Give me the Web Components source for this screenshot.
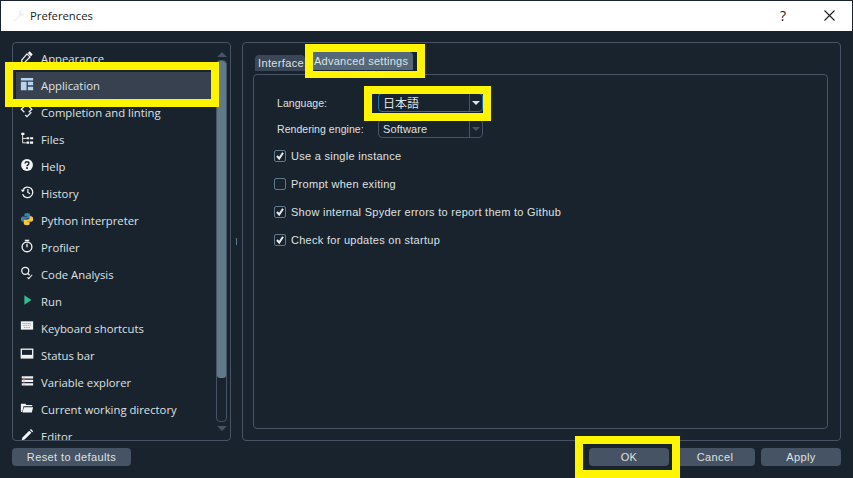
<!DOCTYPE html>
<html>
<head>
<meta charset="utf-8">
<title>Preferences</title>
<style>
  html, body { margin: 0; height: 100%; background: #19232D; }
  body { overflow: hidden; }
</style>
</head>
<body>
<ventana-preferencias></ventana-preferencias>
<script>
const ICONES = {
  appearance: '<path d="M11 1.500l3.500 3.500-2 2-3.500-3.500z" fill="#fff"/><path d="M8 4.500l3.500 3.500-6.500 6.500H2v-3z" fill="none" stroke="#e8eaec" stroke-width="1.400"/><path d="M1.500 15l1-2 1 1z" fill="#fff"/>',
  application: '<path d="M0 0h14v3H0zM0 4.500h6.500V14H0zM8 4.500h6V8.500H8zM8 10h6v4H8z" transform="translate(1 1)" fill="#b7d4ee"/>',
  completion: '<path d="M5 2.500L1.500 6 5 9.500M10 2.500L13.500 6 10 9.500" fill="none" stroke="#e8eaec" stroke-width="1.500"/><path d="M6 12.500l2 2 5-5" fill="none" stroke="#e8eaec" stroke-width="1.500"/>',
  files: '<path d="M1.500 2h3.500v2.500H1.500zM7.500 7h3v2.500h-3zM11.500 7h3.500v2.500h-3.500zM7.500 12h3v2.500h-3zM11.500 12h3.500v2.500h-3.500z" fill="#fff"/><path d="M3 4v9.500h4.500M3 8.500h4.500" fill="none" stroke="#fff"/>',
  help: '<circle cx="8" cy="8" r="6.800" fill="#f2f4f5"/><path d="M5.800 6.200C5.900 4.800 6.800 4.200 8 4.200c1.300 0 2.200.8 2.200 1.900 0 1.800-2.200 1.700-2.200 3.400" fill="none" stroke="#19232D" stroke-width="1.600"/><rect x="7" y="10.500" width="2" height="2" fill="#19232D"/>',
  history: '<path d="M3.500 5.200A6 6 0 1 1 3 10.500" fill="none" stroke="#f0f2f3" stroke-width="1.500"/><path d="M.8 5.500h4.800L3.200 8.300z" fill="#f0f2f3"/><path d="M9 4.500V8.500l2.500 1.500" fill="none" stroke="#f0f2f3" stroke-width="1.400"/>',
  python: '<path d="M7.900 1C5.700 1 5 2 5 3v1.500h3.200V5H3.200C2 5 1 6 1 8s1 3.200 2.200 3.200H5V9.500c0-1.200 1-2 2.200-2h2.800c1 0 1.700-.8 1.700-1.700V3c0-1-1.300-2-3.800-2z" fill="#3d7eb5"/><path d="M8.100 15c2.200 0 2.900-1 2.900-2v-1.500H7.800V11h5c1.200 0 2.200-1 2.200-3s-1-3.200-2.200-3.200H11v1.700c0 1.200-1 2-2.200 2H6c-1 0-1.700.8-1.700 1.700V13c0 1 1.300 2 3.800 2z" fill="#f5c93e"/>',
  profiler: '<rect x="5.500" y=".8" width="5" height="1.500" fill="#f0f2f3"/><circle cx="8" cy="9" r="5.600" fill="none" stroke="#f0f2f3" stroke-width="1.500"/><path d="M8 5.500V9.500" stroke="#f0f2f3" stroke-width="1.500"/>',
  analysis: '<circle cx="6" cy="5.500" r="4" fill="none" stroke="#f0f2f3" stroke-width="1.500"/><path d="M9 8.500l2 2" stroke="#f0f2f3" stroke-width="1.500"/><path d="M8.500 13l1.500 1.500 4-4.500" fill="none" stroke="#f0f2f3" stroke-width="1.200"/>',
  run: '<path d="M5 2.500L13 8l-8 5.500z" fill="#2fc08d"/>',
  keyboard: '<rect x="1" y="1.500" width="14" height="9.500" fill="#f0f2f3"/><path d="M3 4h10M3 6h10M4.500 8.500h7" stroke="#8a959f" stroke-width="1" stroke-dasharray="1.200 .8"/>',
  status: '<rect x="1.500" y="2.500" width="13" height="10" fill="none" stroke="#f0f2f3" stroke-width="1.500"/><rect x="1.500" y="9" width="13" height="3.500" fill="#f0f2f3"/>',
  variable: '<path d="M2 2.500h13v2.500H2zM2 6.500h13v2.500H2zM2 10.500h13v2.500H2z" fill="#f0f2f3"/><path d="M4.500 2.500v10.500" stroke="#e0a080"/>',
  folder: '<path d="M1 3h5l1.500 1.500H14V6H4L2.500 12.500H1z" fill="#f0f2f3"/><path d="M4.500 7H15l-1.500 6H2.800z" fill="#f0f2f3"/>',
  editor: '<path d="M2 14l.8-3.200L10.500 3l2.500 2.500-7.700 7.700z" fill="#f5f6f7"/><path d="M11.300 2.200l1.200-1 2.500 2.500-1 1.200z" fill="#f5f6f7"/>'
};

const ITENS = [
  ['appearance', 'Appearance'], ['application', 'Application'], ['completion', 'Completion and linting'],
  ['files', 'Files'], ['help', 'Help'], ['history', 'History'], ['python', 'Python interpreter'],
  ['profiler', 'Profiler'], ['analysis', 'Code Analysis'], ['run', 'Run'], ['keyboard', 'Keyboard shortcuts'],
  ['status', 'Status bar'], ['variable', 'Variable explorer'], ['folder', 'Current working directory'], ['editor', 'Editor']
];

const FONTE_UI = '"Liberation Sans", "Noto Sans CJK JP", sans-serif';

class BotaoDialogo extends HTMLElement {
  constructor() {
    super();
    this.attachShadow({ mode: "open" }).innerHTML = `
      <style>
        :host {
          display: flex;
          align-items: center;
          justify-content: center;
          box-sizing: border-box;
          height: 18px;
          width: var(--largura, 80px);
          background: #455364;
          border-radius: 4px;
          color: #DFE1E2;
          font: 11px ${FONTE_UI};
          letter-spacing: .4px;
        }
      </style>
      <slot></slot>`;
  }
}

class ItemLista extends HTMLElement {
  constructor() {
    super();
    const icone = ICONES[this.getAttribute("icone")];
    this.attachShadow({ mode: "open" }).innerHTML = `
      <style>
        :host {
          display: flex;
          align-items: center;
          flex: none;
          height: 27px;
          box-sizing: border-box;
          padding-left: 4px;
          gap: 7px;
          color: #DFE1E2;
          font: 11.300px "Open Sans", sans-serif;
          white-space: nowrap;
        }
        :host([ativo]) { background: #37414F; }
        svg { width: 14px; height: 14px; flex: none; margin-top: -2px; }
      </style>
      <svg viewBox="0 0 16 16">${icone}</svg><slot></slot>`;
  }
}

class ListaPaginas extends HTMLElement {
  constructor() {
    super();
    const itens = ITENS.map(([ic, txt]) =>
      `<item-lista icone="${ic}"${ic === "application" ? " ativo" : ""}>${txt}</item-lista>`).join("");
    this.attachShadow({ mode: "open" }).innerHTML = `
      <style>
        :host {
          display: flex;
          box-sizing: border-box;
          width: 219px;
          height: 399px;
          border: 1px solid #455364;
          border-radius: 4px;
          overflow: hidden;
        }
        .itens {
          flex: 1;
          min-width: 0;
          display: flex;
          flex-direction: column;
          padding: 1.500px 0 0 3px;
          overflow: hidden;
        }
        .barra {
          flex: none;
          width: 11px;
          margin-right: 3px;
          display: flex;
          flex-direction: column;
          align-items: center;
        }
        .seta { width: 0; height: 0; border-left: 5px solid transparent; border-right: 5px solid transparent; flex: none; }
        .cima { border-bottom: 5px solid #455364; margin: 9px 0 3px; }
        .baixo { border-top: 5px solid #455364; margin: 4px 0 9px; }
        .trilha { flex: 1; width: 100%; border: 1px solid #455364; border-radius: 4px; box-sizing: border-box; overflow: hidden; }
        .polegar { height: 317px; background: #60798B; border-radius: 3px; }
      </style>
      <div class="itens">${itens}</div>
      <div class="barra">
        <div class="seta cima"></div>
        <div class="trilha"><div class="polegar"></div></div>
        <div class="seta baixo"></div>
      </div>`;
  }
}

class CaixaCombinacao extends HTMLElement {
  constructor() {
    super();
    this.attachShadow({ mode: "open" }).innerHTML = `
      <style>
        :host {
          display: flex;
          box-sizing: border-box;
          width: 105px;
          height: 19px;
          border: 1px solid #455364;
          border-radius: 4px;
          color: #DFE1E2;
          align-items: center;
          letter-spacing: .1px;
          --seta: #455364;
        }
        :host([foco]) { border-color: #1A72BB; --seta: #E0E1E3; font-size: 12px; letter-spacing: 0; }
        .texto { flex: 1; padding-left: 4px; white-space: nowrap; }
        .botao { width: 12px; align-self: stretch; border-left: 1px solid #455364; display: flex; align-items: center; justify-content: center; }
        .botao::after { content: ""; border-left: 4px solid transparent; border-right: 4px solid transparent; border-top: 4px solid var(--seta); }
      </style>
      <div class="texto"><slot></slot></div><div class="botao"></div>`;
  }
}

class CaixaMarcar extends HTMLElement {
  constructor() {
    super();
    const marcada = this.hasAttribute("marcada");
    this.attachShadow({ mode: "open" }).innerHTML = `
      <style>
        :host {
          display: flex;
          align-items: center;
          gap: 5px;
          height: 14px;
          color: #DFE1E2;
          white-space: nowrap;
          letter-spacing: .28px;
        }
        .caixa {
          box-sizing: border-box;
          width: 12px;
          height: 12px;
          flex: none;
          border: 1px solid #60798B;
          border-radius: 2px;
          display: flex;
        }
        svg { width: 10px; height: 10px; }
      </style>
      <div class="caixa">${marcada ? '<svg viewBox="0 0 10 10"><path d="M2 5l2.200 2.500L8 1.800" fill="none" stroke="#E8EAEB" stroke-width="2"/></svg>' : ""}</div>
      <slot></slot>`;
  }
}

class PainelAvancado extends HTMLElement {
  constructor() {
    super();
    this.attachShadow({ mode: "open" }).innerHTML = `
      <style>
        :host {
          display: flex;
          flex-direction: column;
          flex: 1;
          box-sizing: border-box;
          border: 1px solid #455364;
          border-radius: 4px;
          margin-right: 12px;
          color: #DFE1E2;
          font: 11px ${FONTE_UI};
          letter-spacing: .36px;
        }
        .abas { display: flex; align-items: flex-end; height: 28px; margin-bottom: 3px; padding-left: 12px; flex: none; }
        .aba { box-sizing: border-box; height: 16px; width: 50px; display: flex; align-items: center; background: #3B4656; border-radius: 4px 4px 0 0; padding: 0 3px; white-space: nowrap; }
        .aba.ativa { height: 18px; width: 108px; background: #54687A; padding: 0 0 0 9px; letter-spacing: .25px; margin-bottom: 1px; }
        .conteudo {
          flex: 1;
          margin: 0 12px 11px 10px;
          border: 1px solid #455364;
          border-radius: 4px;
          padding: 18px 0 0 23px;
          display: flex;
          flex-direction: column;
          box-sizing: border-box;
        }
        .grade { display: grid; grid-template-columns: 101px 105px; row-gap: 7px; align-items: center; }
        .grade span { white-space: nowrap; font-size: 10.500px; letter-spacing: .05px; }
        .opcoes { display: flex; flex-direction: column; gap: 14px; margin-top: 11px; margin-left: -3px; }
      </style>
      <div class="abas">
        <div class="aba">Interface</div>
        <div class="aba ativa">Advanced settings</div>
      </div>
      <div class="conteudo">
        <div class="grade">
          <span>Language:</span><caixa-combinacao foco>日本語</caixa-combinacao>
          <span>Rendering engine:</span><caixa-combinacao>Software</caixa-combinacao>
        </div>
        <div class="opcoes">
          <caixa-marcar marcada>Use a single instance</caixa-marcar>
          <caixa-marcar>Prompt when exiting</caixa-marcar>
          <caixa-marcar marcada>Show internal Spyder errors to report them to Github</caixa-marcar>
          <caixa-marcar marcada>Check for updates on startup</caixa-marcar>
        </div>
      </div>`;
  }
}

class DestaqueAmarelo extends HTMLElement {
  constructor() {
    super();
    this.attachShadow({ mode: "open" }).innerHTML = `
      <style>
        :host {
          position: absolute;
          box-sizing: border-box;
          border: 8px solid #FFF500;
          pointer-events: none;
        }
      </style>`;
  }
}

class VentanaPreferencias extends HTMLElement {
  constructor() {
    super();
    this.attachShadow({ mode: "open" }).innerHTML = `
      <style>
        :host {
          display: flex;
          flex-direction: column;
          position: relative;
          width: 853px;
          height: 478px;
          box-sizing: border-box;
          background: #19232D;
          overflow: hidden;
        }
        .titulo {
          flex: none;
          box-sizing: border-box;
          height: 30px;
          margin: 1px 1px 0 1px;
          padding-bottom: 2px;
          background: #fff;
          color: #1b1b1b;
          display: flex;
          align-items: center;
          font: 11.300px "Open Sans", sans-serif;
          padding-left: 10px;
        }
        .titulo svg.ferramenta { width: 16px; height: 16px; margin-right: 3px; }
        .titulo .nome { flex: 1; }
        .titulo .ajuda { width: 46px; text-align: center; font: 14px "Open Sans", sans-serif; }
        .titulo .fechar { width: 46px; display: flex; justify-content: center; }
        .corpo { flex: none; height: 399px; display: flex; margin: 11px 0 0 12px; }
        .divisor { flex: none; width: 11px; display: flex; align-items: center; justify-content: center; }
        .divisor i { width: 1px; height: 7px; background: #60798B; }
        .rodape { flex: 1; display: flex; align-items: flex-start; padding: 7px 12px 0; gap: 6px; }
        .rodape .espaco { flex: 1; }
        .d1 { left: 5px; top: 62px; width: 214px; height: 45px; }
        .d2 { left: 305px; top: 44px; width: 120px; height: 34px; border-bottom-width: 7px; }
        .d3 { left: 364px; top: 86px; width: 127px; height: 35px; }
        .d4 { left: 575px; top: 436px; width: 105px; height: 42px; }
      </style>
      <div class="titulo">
        <svg class="ferramenta" viewBox="0 0 16 16"><path d="M2 14l6-6c-.8-2 .2-4.500 3.500-5l-1.500 2.500 1.500 1.500 2.500-1.500c-.2 3-3 4.500-5 3.500l-6 6z" fill="#f1f1f1"/></svg>
        <span class="nome">Preferences</span>
        <span class="ajuda">?</span>
        <span class="fechar"><svg width="11" height="11" viewBox="0 0 11 11"><path d="M.5.500l10 10M10.500.500l-10 10" stroke="#1b1b1b" stroke-width="1.100"/></svg></span>
      </div>
      <div class="corpo">
        <lista-paginas></lista-paginas>
        <div class="divisor"><i></i></div>
        <painel-avancado></painel-avancado>
      </div>
      <div class="rodape">
        <botao-dialogo style="--largura:119px">Reset to defaults</botao-dialogo>
        <span class="espaco"></span>
        <botao-dialogo style="--largura:80px">OK</botao-dialogo>
        <botao-dialogo style="--largura:80px">Cancel</botao-dialogo>
        <botao-dialogo style="--largura:80px">Apply</botao-dialogo>
      </div>
      <destaque-amarelo class="d1"></destaque-amarelo>
      <destaque-amarelo class="d2"></destaque-amarelo>
      <destaque-amarelo class="d3"></destaque-amarelo>
      <destaque-amarelo class="d4"></destaque-amarelo>`;
  }
}

customElements.define("botao-dialogo", BotaoDialogo);
customElements.define("item-lista", ItemLista);
customElements.define("lista-paginas", ListaPaginas);
customElements.define("caixa-combinacao", CaixaCombinacao);
customElements.define("caixa-marcar", CaixaMarcar);
customElements.define("painel-avancado", PainelAvancado);
customElements.define("destaque-amarelo", DestaqueAmarelo);
customElements.define("ventana-preferencias", VentanaPreferencias);
</script>
</body>
</html>
